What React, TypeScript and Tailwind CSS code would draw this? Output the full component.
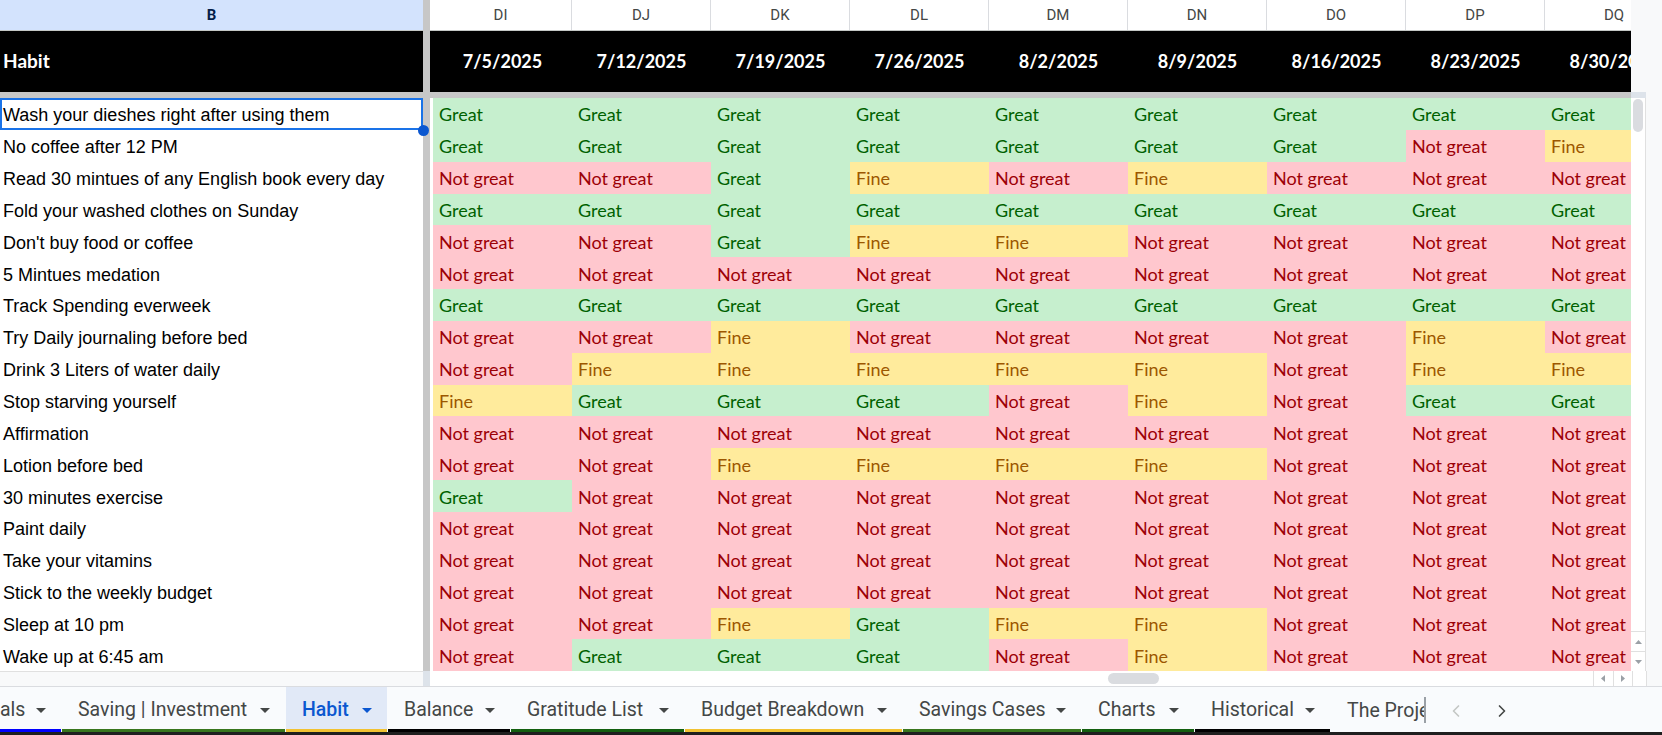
import { ChevronLeft, ChevronRight } from "lucide-react";

type Mark = "G" | "N" | "F";

const columns = ["DI", "DJ", "DK", "DL", "DM", "DN", "DO", "DP", "DQ"];
const dates = ["7/5/2025", "7/12/2025", "7/19/2025", "7/26/2025", "8/2/2025", "8/9/2025", "8/16/2025", "8/23/2025", "8/30/2025"];

const habits: { name: string; marks: string }[] = [
  { name: "Wash your dieshes right after using them", marks: "GGGGGGGGG" },
  { name: "No coffee after 12 PM", marks: "GGGGGGGNF" },
  { name: "Read 30 mintues of any English book every day", marks: "NNGFNFNNN" },
  { name: "Fold your washed clothes on Sunday", marks: "GGGGGGGGG" },
  { name: "Don't buy food or coffee", marks: "NNGFFNNNN" },
  { name: "5 Mintues medation", marks: "NNNNNNNNN" },
  { name: "Track Spending everweek", marks: "GGGGGGGGG" },
  { name: "Try Daily journaling before bed", marks: "NNFNNNNFN" },
  { name: "Drink 3 Liters of water daily", marks: "NFFFFFNFF" },
  { name: "Stop starving yourself", marks: "FGGGNFNGG" },
  { name: "Affirmation", marks: "NNNNNNNNN" },
  { name: "Lotion before bed", marks: "NNFFFFNNN" },
  { name: "30 minutes exercise", marks: "GNNNNNNNN" },
  { name: "Paint daily", marks: "NNNNNNNNN" },
  { name: "Take your vitamins", marks: "NNNNNNNNN" },
  { name: "Stick to the weekly budget", marks: "NNNNNNNNN" },
  { name: "Sleep at 10 pm", marks: "NNFGFFNNN" },
  { name: "Wake up at 6:45 am", marks: "NGGGNFNNN" },
];

const markStyle: Record<Mark, { label: string; cls: string }> = {
  G: { label: "Great", cls: "bg-[#c6efce] text-[#006100]" },
  N: { label: "Not great", cls: "bg-[#ffc7ce] text-[#9c0006]" },
  F: { label: "Fine", cls: "bg-[#ffeb9c] text-[#9c5700]" },
};

const tabs = [
  { label: "als", w: "w-[61px]", pad: "pl-0", line: "border-[#0000ff]" },
  { label: "Saving | Investment", w: "w-[223px]", pad: "pl-4", line: "border-[#38761d]" },
  { label: "Habit", w: "w-[101px]", pad: "pl-4", line: "border-[#f1c232]", active: true },
  { label: "Balance", w: "w-[122px]", pad: "pl-4", line: "border-black" },
  { label: "Gratitude List", w: "w-[173px]", pad: "pl-4", line: "border-[#135f0f]" },
  { label: "Budget Breakdown", w: "w-[217px]", pad: "pl-4", line: "border-[#f1c232]" },
  { label: "Savings Cases", w: "w-[178px]", pad: "pl-4", line: "border-[#38761d]" },
  { label: "Charts", w: "w-[112px]", pad: "pl-4", line: "border-[#135f0f]" },
  { label: "Historical", w: "w-[135px]", pad: "pl-4", line: "border-black" },
];

function Caret({ active }: { active?: boolean }) {
  return (
    <svg width="10" height="5" viewBox="0 0 10 5" className={active ? "fill-[#0b57d0]" : "fill-[#444746]"}>
      <path d="M0 0h10L5 5z" />
    </svg>
  );
}

function MarkCell({ mark }: { mark: Mark }) {
  const s = markStyle[mark];
  return (
    <div className={`flex h-full w-[139px] shrink-0 items-center pl-[6px] pt-[2px] ${s.cls}`}>{s.label}</div>
  );
}

export default function App() {
  return (
    <div className="flex h-[735px] w-[1662px] flex-col overflow-hidden bg-[#f8f9fa]">
      <div className="flex h-[686px] flex-col">
        {/* column letters */}
        <div className="flex h-[31px] shrink-0 font-['Roboto',Arial,sans-serif] text-[15px]">
          <div className="flex w-[423px] items-center justify-center border-b border-[#c4c7c5] bg-[#d3e3fd] font-bold text-[#041e49]">B</div>
          <div className="w-[7px] bg-[#c7c7c7]" />
          <div className="flex w-[1201px] overflow-hidden border-b border-[#c4c7c5] bg-white pl-[3px] text-[#444746]">
            {columns.map((c, i) => (
              <div key={c} className={`flex w-[139px] shrink-0 items-center justify-center border-r border-[#dadce0] ${i === 0 ? "-ml-[3px] w-[142px]" : ""}`}>
                {c}
              </div>
            ))}
          </div>
          <div className="flex-1" />
        </div>

        {/* header row */}
        <div className="flex h-[61px] shrink-0 font-['Lato',sans-serif] text-[18px] font-bold text-white">
          <div className="flex w-[423px] items-center bg-black pl-[3px] text-[19px]">Habit</div>
          <div className="w-[7px] bg-[#c7c7c7]" />
          <div className="flex w-[1201px] overflow-hidden bg-black pl-[3px]">
            {dates.map((d) => (
              <div key={d} className="flex w-[139px] shrink-0 items-center justify-center whitespace-nowrap">
                {d}
              </div>
            ))}
          </div>
          <div className="flex-1" />
        </div>

        {/* frozen row divider */}
        <div className="flex h-[6px] shrink-0">
          <div className="w-[1631px] bg-[#c7c7c7]" />
          <div className="w-[15px] bg-[#dde3ea]" />
          <div className="flex-1" />
        </div>

        {/* body */}
        <div className="flex h-[573.3px] shrink-0">
          <div className="flex w-[1631px] flex-col bg-white">
            {habits.map((h, r) => (
              <div key={h.name} className="flex h-[31.85px] shrink-0">
                <div className="relative flex w-[423px] items-center pl-[3px] pt-[4px] font-['Liberation_Sans',Arial,sans-serif] text-[18px] text-black">
                  {h.name}
                  {r === 0 ? (
                    <>
                      <div className="absolute inset-0 border-2 border-[#1a73e8]" />
                      <div className="absolute right-[-6px] bottom-[-6px] z-10 h-[11px] w-[11px] rounded-full bg-[#0b57d0]" />
                    </>
                  ) : null}
                </div>
                <div className="w-[7px] bg-[#c7c7c7]" />
                <div className="flex w-[1201px] overflow-hidden pl-[3px] font-['Lato',sans-serif] text-[18px]">
                  {h.marks.split("").map((m, i) => (
                    <MarkCell key={i} mark={m as Mark} />
                  ))}
                </div>
              </div>
            ))}
          </div>
          <div className="flex w-[15px] flex-col border-r border-[#e0e0e0] bg-white">
            <div className="mx-[2px] mt-[1px] h-[33px] rounded-full bg-[#dadce0]" />
            <div className="flex-1" />
            <div className="flex h-[20px] items-center justify-center border-t border-[#e0e0e0]">
              <svg width="7" height="4" viewBox="0 0 7 4" className="fill-[#9aa0a6]"><path d="M0 4h7L3.5 0z" /></svg>
            </div>
            <div className="flex h-[20px] items-center justify-center border-t border-[#e0e0e0]">
              <svg width="7" height="4" viewBox="0 0 7 4" className="fill-[#9aa0a6]"><path d="M0 0h7L3.5 4z" /></svg>
            </div>
          </div>
          <div className="flex-1" />
        </div>

        {/* horizontal scroll */}
        <div className="flex flex-1">
          <div className="w-[423px] border-t border-[#e0e0e0] bg-[#f8f9fa]" />
          <div className="w-[7px] bg-[#dde3ea]" />
          <div className="flex w-[1163px] items-center bg-white">
            <div className="ml-[678px] h-[11px] w-[51px] rounded-full bg-[#dadce0]" />
          </div>
          <div className="flex w-[39px] border-l border-[#e0e0e0] bg-white">
            <div className="flex flex-1 items-center justify-center border-r border-[#e0e0e0]">
              <svg width="4" height="7" viewBox="0 0 4 7" className="fill-[#9aa0a6]"><path d="M4 0v7L0 3.5z" /></svg>
            </div>
            <div className="flex flex-1 items-center justify-center">
              <svg width="4" height="7" viewBox="0 0 4 7" className="fill-[#9aa0a6]"><path d="M0 0v7L4 3.5z" /></svg>
            </div>
          </div>
          <div className="w-[15px] border-x border-[#e0e0e0] bg-white" />
          <div className="flex-1" />
        </div>
      </div>

      {/* sheet tabs */}
      <div className="flex h-[46px] shrink-0 border-t border-[#dadce0] bg-[#f9fbfd] font-['Roboto',Arial,sans-serif] text-[19.5px] text-[#444746]">
        {tabs.map((t) => (
          <div
            key={t.label}
            className={`mr-px flex shrink-0 items-center justify-between border-b-[3px] pt-[4px] pr-[15px] ${t.w} ${t.pad} ${t.line} ${t.active ? "bg-[#e1e9f7] font-medium text-[#0b57d0]" : ""}`}
          >
            <span>{t.label}</span>
            <Caret active={t.active} />
          </div>
        ))}
        <div className="flex h-[43px] w-[93px] shrink-0 items-center overflow-hidden pt-[4px] pl-[16px]">
          <span className="whitespace-nowrap">The Proje</span>
        </div>
        <div className="mt-[10px] h-[26px] w-[2px] bg-[#9aa0a6]" />
        <div className="flex h-[43px] items-center gap-[26px] pt-[4px] pl-[20px]">
          <ChevronLeft className="size-[20px] text-[#c4c7c5]" strokeWidth={2} />
          <ChevronRight className="size-[20px] text-[#444746]" strokeWidth={2} />
        </div>
      </div>
      <div className="h-[3px] shrink-0 bg-[#1f1f1f]" />
    </div>
  );
}
